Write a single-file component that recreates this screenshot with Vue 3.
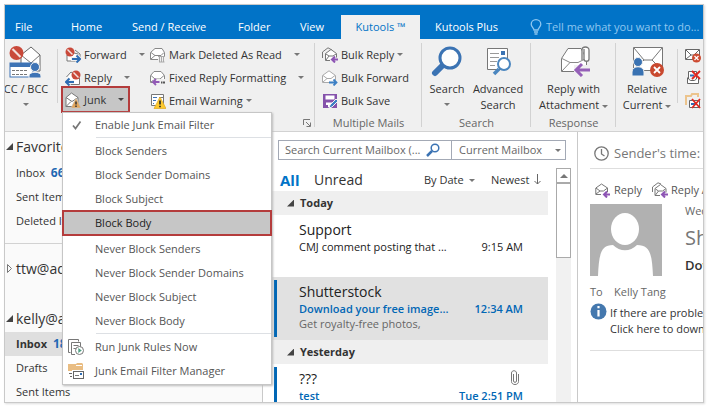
<script setup>
import { ref } from 'vue'

const tabs = [
  { name: 'File', cls: 'file' },
  { name: 'Home', cls: 'home' },
  { name: 'Send / Receive', cls: 'send' },
  { name: 'Folder', cls: 'folder' },
  { name: 'View', cls: 'view' },
  { name: 'Kutools ™', cls: 'active' },
  { name: 'Kutools Plus', cls: 'plus' }
]
const menu = [
  ['Block Senders', 'Block Sender Domains', 'Block Subject', 'Block Body'],
  ['Never Block Senders', 'Never Block Sender Domains', 'Never Block Subject', 'Never Block Body']
]
const search = ref('')
const tellMe = ref('')
</script>

<template>
  <div class="window">
    <header class="titlebar">
      <nav class="tabs">
        <button v-for="t in tabs" :key="t.name" class="tab" :class="t.cls">{{ t.name }}</button>
      </nav>
      <label class="tell">
        <svg width="12" height="16" viewBox="0 0 12 16" fill="none" stroke="#8fc7f0" stroke-width="1.3">
          <path d="M4 11C4 9 1.2 8 1.2 5.3a4.8 4.6 0 0 1 9.6 0C10.800 8 8 9 8 11zM4 13h4M4.500 15h3" />
        </svg>
        <input v-model="tellMe" type="text" placeholder="Tell me what you want to do..." aria-label="Tell me what you want to do" />
      </label>
    </header>

    <section class="ribbon">
      <div class="group g-bcc">
        <button class="big bcc">
          <svg width="34" height="34" viewBox="0 0 34 34">
            <path d="M12 10 22 2l9 8v16H12z" fill="#fff" stroke="#666" />
            <path d="M12 10l10 8 9-8" fill="none" stroke="#777" />
            <circle cx="7.500" cy="8" r="7" fill="#c9493a" />
            <path d="M3.500 4l8 8" stroke="#f3e0dc" stroke-width="2.200" />
            <rect x="1" y="18" width="23" height="14" fill="#fff" stroke="#3d73b5" />
            <rect x="1" y="18" width="23" height="4" fill="#3d73b5" />
            <path d="M3 25.500h15M3 29.500h15" stroke="#777" stroke-dasharray="3 1" />
            <circle cx="26" cy="22" r="4.500" fill="#3d73b5" stroke="#f0f0f0" />
            <path d="M20 33v-2c0-5 12-5 12 0v2z" fill="#3d73b5" stroke="#f0f0f0" />
          </svg>
          <span>CC / BCC</span>
          <i class="caret"></i>
        </button>
      </div>

      <div class="group g-auto">
        <div class="col col-a">
          <button class="small">
            <svg width="16" height="16" viewBox="0 0 16 16">
              <path d="M2 8l3-3 8 2v7H2z" fill="#fff" stroke="#777" />
              <circle cx="5" cy="5" r="4.500" fill="#c9493a" />
              <path d="M2.500 2.500l5 5" stroke="#f3e0dc" stroke-width="1.500" />
              <path d="M10 3l5 4v3" fill="none" stroke="#777" />
              <path d="M6 12h9M11.500 8.500 15 12l-3.500 3.500" fill="none" stroke="#f0f0f0" stroke-width="4" />
              <path d="M7 12h8M11.500 8.500 15 12l-3.500 3.500" fill="none" stroke="#2e6db4" stroke-width="2" />
            </svg>
            <span>Forward</span><i class="caret gap"></i>
          </button>
          <button class="small">
            <svg width="16" height="16" viewBox="0 0 16 16">
              <path d="M1.500 7 6 2l8.500 6v6.500h-9" fill="#fff" stroke="#777" />
              <circle cx="11" cy="5" r="4.500" fill="#c9493a" />
              <path d="M8.500 2.500l5 5" stroke="#f3e0dc" stroke-width="1.500" />
              <path d="M9 12H1M4.500 8.500 1 12l3.500 3.500" fill="none" stroke="#f0f0f0" stroke-width="4" />
              <path d="M9 12H1M4.500 8.500 1 12l3.500 3.500" fill="none" stroke="#2e6db4" stroke-width="2" />
            </svg>
            <span>Reply</span><i class="caret gap"></i>
          </button>
          <div class="junk-wrap">
            <button class="small junk" aria-haspopup="true" aria-expanded="true">
              <svg width="16" height="16" viewBox="0 0 16 16">
                <path d="M1 5.500 6.500 1 13 5.500v9H1z" fill="#fff" stroke="#777" />
                <path d="M1 5.500l6 4 6-4M1 14.500l5-5" fill="none" stroke="#777" />
                <path d="M11 6l5 10H6z" fill="#e3a65c" stroke="#c6c6c6" stroke-width=".6" />
                <path d="M11 9.500v3M11 13.500V15" stroke="#333" stroke-width="1.500" />
              </svg>
              <span>Junk</span><i class="caret gap dark"></i>
            </button>
            <div class="menu" role="menu">
              <div class="section">
                <button class="item" role="menuitem">
                  <svg width="16" height="16" viewBox="0 0 16 16" fill="none" stroke="#777" stroke-width="1.700"><path d="M5 8.500 7.500 11.500l5-7" /></svg>
                  <span>Enable Junk Email Filter</span>
                </button>
              </div>
              <div v-for="(sec, i) in menu" :key="i" class="section" :class="{ ruled: i === 0 }">
                <button v-for="m in sec" :key="m" class="item" :class="{ hot: m === 'Block Body' }" role="menuitem">
                  <i class="blank"></i><span>{{ m }}</span>
                </button>
              </div>
              <div class="section ruled">
                <button class="item" role="menuitem">
                  <svg width="16" height="16" viewBox="0 0 16 16" fill="none" stroke="#777">
                    <path d="M2.500 13.500h-2v-13h10v2" /><path d="M7 15.500H3.500v-12h9V8M5.500 6.500h5M5.500 9.500H8" />
                    <circle cx="11.500" cy="11.500" r="4" fill="#fff" /><path d="M10.300 9v5l3.500-2.500z" fill="#4f9f84" stroke="none" />
                  </svg>
                  <span>Run Junk Rules Now</span>
                </button>
                <button class="item" role="menuitem">
                  <svg width="16" height="16" viewBox="0 0 16 16">
                    <path d="M0 1h8l1-1h5l1 1v7H0z" fill="#e9bd83" /><path d="M8 2.500h6" stroke="#fff" />
                    <path d="M4 7h12v9H4z" fill="#fff" />
                    <path d="M1 10.500h3M2 13.500h2" stroke="#666" />
                    <rect x="5.500" y="8.500" width="10" height="7" fill="#fff" stroke="#666" /><path d="M7 12.500h4" stroke="#777" /><rect x="12" y="10" width="2" height="2" fill="#2e6db4" />
                  </svg>
                  <span>Junk Email Filter Manager</span>
                </button>
              </div>
            </div>
          </div>
        </div>
        <div class="col col-b">
          <button class="small">
            <svg width="16" height="16" viewBox="0 0 16 16">
              <path d="M.5 12.500v-7L5 1.500h7l2.500 4v7z" fill="#fff" stroke="#888" />
              <path d="M1 5.500l4 3h6l3-3M1 12l4-3.500" fill="none" stroke="#888" />
              <path d="M8 9h7v6H8z" fill="#f0f0f0" /><path d="M8 9.500h7M9.500 10v5M11.500 10v5M13.500 10v5M9 15h5.500" stroke="#aaa" />
            </svg>
            <span>Mark Deleted As Read</span><i class="caret gap"></i>
          </button>
          <button class="small">
            <svg width="16" height="16" viewBox="0 0 16 16">
              <path d="M.5 12.500v-7L4 1.500h7l3.500 4v7z" fill="#fff" stroke="#888" />
              <path d="M1 5.500l4 3.500h5l4-3.500M1 12l4-3" fill="none" stroke="#888" />
              <path d="M3 9h12v6H3z" fill="#f0f0f0" />
              <path d="M9.500 12H3M6 9l-3 3 3 3" fill="none" stroke="#9159b5" stroke-width="1.800" />
              <path d="M11 12.500h1.500M13 12.500h2" stroke="#555" stroke-width="2" />
            </svg>
            <span>Fixed Reply Formatting</span><i class="caret gap"></i>
          </button>
          <button class="small">
            <svg width="16" height="16" viewBox="0 0 16 16">
              <path d="M1.500 1.500h12v11h-12z" fill="#fff" stroke="#777" />
              <path d="M3 4.500h4M3 7.500h3M3 10.500h1" stroke="#3d73b5" /><path d="M9 4.500h4" stroke="#777" />
              <path d="M10 4l6 11.500H4z" fill="#fcc92e" stroke="#e0a822" stroke-width=".7" />
              <path d="M10 7.500v4M10 12.800v1.500" stroke="#222" stroke-width="1.600" />
            </svg>
            <span>Email Warning</span><i class="caret near"></i>
          </button>
        </div>
        <svg class="launcher" width="8" height="8" viewBox="0 0 8 8" fill="none" stroke="#777"><path d="M.5 6V.5H7M3 3l4 4M7.500 3.500v4h-4" /></svg>
      </div>

      <div class="group g-multi">
        <div class="col">
          <button class="small">
            <svg width="16" height="16" viewBox="0 0 16 16" fill="none" stroke="#777">
              <path d="M.5 11V5L6 .8 10 3" /><path d="M3.500 13.500v-7L9 2.500l5.500 4v4M3.500 13.500H8" fill="#fff" />
              <path d="M4 7l3 2h4l3-2M4 13l3-4" /><path d="M16 12.500h-6M13 9.500l-3 3 3 3" stroke="#8d55b4" stroke-width="2" />
            </svg>
            <span>Bulk Reply</span><i class="caret near"></i>
          </button>
          <button class="small">
            <svg width="16" height="16" viewBox="0 0 16 16" fill="none" stroke="#aaa">
              <path d="M.5 12.500V5.500L7 .8l6.500 4.700v7z" fill="#fff" /><path d="M1 5.500l4 3h4l4-3M1 12l4-3.500" />
              <path d="M7 12.500h8" stroke="#f0f0f0" stroke-width="4" /><path d="M7 12.500h7.500M11.500 9.500l3 3-3 3" stroke="#3d80c4" stroke-width="1.800" />
            </svg>
            <span>Bulk Forward</span>
          </button>
          <button class="small">
            <svg width="16" height="16" viewBox="0 0 16 16">
              <path d="M1 1h14v14H1z" fill="#8552ab" /><path d="M3.500 2.500h9v4h-9zM4 9.500h6V14H6v-2H4z" fill="#fff" />
              <path d="M7 15l1-3 6-6 2 2-6 6z" fill="#3d80c4" stroke="#f0f0f0" />
            </svg>
            <span>Bulk Save</span>
          </button>
        </div>
        <div class="caption">Multiple Mails</div>
      </div>

      <div class="group g-search">
        <div class="row">
          <button class="big b-search">
            <svg width="32" height="32" viewBox="0 0 32 32">
              <path d="M13 19 4 28" stroke="#3b73b3" stroke-width="6" stroke-linecap="round" />
              <circle cx="19" cy="13" r="10" fill="#fdfdfd" stroke="#3b73b3" stroke-width="3" />
            </svg>
            <span>Search</span><i class="caret"></i>
          </button>
          <button class="big b-adv">
            <svg width="32" height="32" viewBox="0 0 32 32">
              <path d="M5.500 3.500h20v21h-20z" fill="#fff" stroke="#777" />
              <path d="M8 8.500h9M8 12.500h9M8 16.500h7M8 20.500h5" stroke="#999" /><rect x="19" y="6" width="4" height="4" fill="#3b73b3" />
              <path d="M17 24l-5 5" stroke="#4b86bf" stroke-width="3.500" />
              <circle cx="22" cy="19" r="6" fill="#fff" stroke="#4b86bf" stroke-width="2" />
            </svg>
            <span>Advanced<br />Search</span>
          </button>
        </div>
        <div class="caption">Search</div>
      </div>

      <div class="group g-resp">
        <button class="big">
          <svg width="32" height="32" viewBox="0 0 32 32">
            <path d="M3.500 13.500v13h25v-13L23 3.500H10z" fill="#fff" stroke="#777" />
            <path d="M4 13.500l8 4h8l8-4M4 26l8-8.500M28 26l-5-5" fill="none" stroke="#888" />
            <path d="M26 4v10c0 3 5 3 5 0V5c0-4-7-4-7 0v10" fill="#fff" stroke="#777" stroke-width="1.300" />
            <path d="M16 20h18v12H16z" fill="#f0f0f0" />
            <path d="M32 25H18M24 19l-6 6 6 6" fill="none" stroke="#9560b8" stroke-width="3" />
          </svg>
          <span>Reply with<br />Attachment <i class="caret"></i></span>
        </button>
        <div class="caption">Response</div>
      </div>

      <div class="group g-rel">
        <button class="big">
          <svg width="34" height="32" viewBox="0 0 34 32">
            <path d="M3.500 2.500h29v23h-29z" fill="#fff" stroke="#777" />
            <path d="M4 3l10 12h8L32 3M4 25l10-10M32 25L22 15" fill="none" stroke="#777" />
            <path d="M2 31v-4c0-7 12-7 12 0v4z" fill="#3972b2" stroke="#f0f0f0" />
            <circle cx="8" cy="17" r="4.500" fill="#3972b2" stroke="#f0f0f0" />
            <circle cx="27" cy="25" r="7" fill="#c9492f" /><path d="M24 22l6 6M30 22l-6 6" stroke="#fff" stroke-width="1.800" />
          </svg>
          <span>Relative<br />Current <i class="caret"></i></span>
        </button>
      </div>

      <div class="group g-more">
        <button class="icon" aria-label="Remove mail">
          <svg width="16" height="16" viewBox="0 0 16 16" fill="none" stroke="#666"><path d="M.5 2.500h14v10H.5z" fill="#fff" /><path d="M1 3l5 5h3l5-5M1 12l5-4" /><circle cx="11.500" cy="11" r="4.500" fill="#cd4b32" stroke="none" /><path d="M9.500 9l4 4M13.500 9l-4 4" stroke="#fff" stroke-width="1.200" /></svg>
        </button>
        <button class="icon" aria-label="Remove attachment">
          <svg width="16" height="16" viewBox="0 0 16 16" fill="none" stroke="#666"><path d="M2.500 7.500v6h11v-6M3.500 9V1.500h8V9l-2 1.500h-4z" fill="#fff" /><path d="M5 5.500h4" stroke="#2e6db4" stroke-width="2" /><path d="M7 1l8 8M15 1L7 9" stroke="#e0271f" stroke-width="1.800" /></svg>
        </button>
        <button class="icon" aria-label="Remove folder">
          <svg width="16" height="16" viewBox="0 0 16 16" fill="none" stroke="#666"><path d="M1 12V3h5l1-2h6v3" stroke="#ecc48d" stroke-width="2" /><path d="M4.500 7.500h10v7h-10z" fill="#fff" /><path d="M6 11h4" stroke="#2e6db4" stroke-width="2" /><path d="M7 6l8 9M15 6l-8 9" stroke="#e0271f" stroke-width="1.800" /></svg>
        </button>
      </div>
    </section>

    <main class="body">
      <aside class="folders">
        <h2><i class="tri open"></i>Favorites</h2>
        <a href="#" class="fold">Inbox <b>66</b></a>
        <a href="#" class="fold">Sent Items</a>
        <a href="#" class="fold">Deleted Items</a>
        <h2 class="acct first"><svg width="7" height="11" viewBox="1 0 7 11" fill="none" stroke="#777"><path d="M2.500 1.500v8l4-4z" /></svg>ttw@addin</h2>
        <h2 class="acct"><i class="tri open"></i>kelly@addin</h2>
        <a href="#" class="fold sel"><strong>Inbox</strong> <b>18</b></a>
        <a href="#" class="fold">Drafts</a>
        <a href="#" class="fold">Sent Items</a>
      </aside>

      <section class="list">
        <div class="find">
          <label class="box">
            <input v-model="search" type="text" placeholder="Search Current Mailbox (..." aria-label="Search Current Mailbox" />
            <svg width="14" height="14" viewBox="0 0 14 14" fill="none" stroke="#3b73b3"><path d="M6 8l-5 5" stroke-width="2.500" /><circle cx="9" cy="5" r="3.800" stroke-width="1.500" /></svg>
          </label>
          <div class="scope">
            <select aria-label="Search scope"><option>Current Mailbox</option></select>
            <i class="caret"></i>
          </div>
        </div>
        <div class="cols">
          <div class="mail">
            <div class="sort">
              <button class="all">All</button>
              <button class="unread">Unread</button>
              <button class="by">By Date <i class="caret"></i></button>
              <button class="newest">Newest <svg width="7" height="11" viewBox="0 0 7 11" fill="none" stroke="#666"><path d="M3.500 0v10M.5 7l3 3 3-3" /></svg></button>
            </div>
            <div class="day"><i class="tri open"></i>Today</div>
            <article class="msg">
              <h3>Support</h3>
              <p><span>CMJ comment posting that ...</span><time>9:15 AM</time></p>
            </article>
            <article class="msg new picked">
              <h3>Shutterstock</h3>
              <p class="hot"><span>Download your free image...</span><time>12:34 AM</time></p>
              <p class="pre">Get royalty-free photos,</p>
            </article>
            <div class="day"><i class="tri open"></i>Yesterday</div>
            <article class="msg new">
              <h3>???<svg width="8" height="15" viewBox="0 0 8 15" fill="none" stroke="#777"><path d="M2.500 4v7c0 1.800 3 1.800 3 0V3c0-3-5-3-5 0v8.500c0 4 7 4 7 0V4" /></svg></h3>
              <p class="hot"><span>test</span><time>Tue 2:51 PM</time></p>
            </article>
          </div>
          <div class="scroll">
            <button class="up" aria-label="Scroll up"><i></i></button>
            <div class="thumb"></div>
          </div>
        </div>
      </section>

      <section class="read">
        <div class="when">
          <svg width="15" height="15" viewBox="0 0 15 15" fill="none" stroke="#777" stroke-width="1.300"><circle cx="7.500" cy="7.500" r="6.700" /><path d="M7.500 3v5l3 2" /></svg>
          Sender's time:
        </div>
        <div class="acts">
          <button><svg width="16" height="16" viewBox="0 0 16 16" fill="none" stroke="#777"><path d="M.8 12.500V6L6.500 2l6 4v4M.8 12.500H6M1 6l4 3h3.500l4-3M1 12l4-3" /><path d="M15 12.500H9M12 9.500l-3 3 3 3" stroke="#8d55b4" stroke-width="2" /></svg>Reply</button>
          <button><svg width="16" height="16" viewBox="0 0 16 16" fill="none" stroke="#777"><path d="M.5 10V5L6 .8 9 2M3 13.500v-7l5.500-4 5.500 4v4M3 13.500h5M3.500 7l3 2h4l3-2M3.500 13l3-4" /><path d="M16 12.500h-6M13 9.500l-3 3 3 3" stroke="#8d55b4" stroke-width="2" /></svg>Reply All</button>
        </div>
        <div class="head">
          <svg class="avatar" width="72" height="72" viewBox="0 0 72 72">
            <rect width="72" height="72" fill="#b1b1b1" />
            <ellipse cx="35" cy="25" rx="14" ry="16" fill="#fff" />
            <path d="M8 72c1-20 2-31 15-31 7 7 17 7 24 0 14 0 15 11 16 31z" fill="#fff" />
          </svg>
          <div class="who">
            <div class="date">Wednesday</div>
            <div class="from">Shutterstock</div>
            <div class="subj">Download</div>
          </div>
        </div>
        <div class="to"><span>To</span>Kelly Tang</div>
        <div class="info">
          <svg width="17" height="17" viewBox="0 0 17 17"><circle cx="8.500" cy="8.500" r="8" fill="#4478ae" /><path d="M8.500 7v6.500M8.500 3v2.200" stroke="#fff" stroke-width="2.200" /></svg>
          <p>If there are problems<br />Click here to download</p>
        </div>
      </section>
    </main>
  </div>
</template>

<style>
body { background: #fff; }
</style>

<style scoped>
* { box-sizing: border-box; }
.window {
  margin: 4px 6px 3px 4px;
  height: calc(100vh - 7px);
  min-height: 240px;
  border: 1px solid #c9c9c9;
  box-shadow: 1px 1px 2px #ddd;
  overflow: hidden;
  display: flex;
  flex-direction: column;
  font: 11px/16px "Open Sans", "Noto Sans", sans-serif;
  color: #333;
  background: #fff;
}
button, input, select { font: inherit; color: inherit; background: none; border: 0; padding: 0; margin: 0; outline: 0; }
button, .fold, h2, h3, p { white-space: nowrap; }
svg { flex: none; display: block; }
h2, h3, p { margin: 0; font-weight: 400; }

.titlebar { flex: none; height: 34px; background: #0173c7; display: flex; align-items: flex-end; color: #fff; }
.tabs { display: flex; }
.tab { height: 24px; text-align: left; padding-left: 10px; }
.file { width: 56px; }
.home { width: 61px; }
.send { width: 106px; }
.folder { width: 62px; }
.view { width: 51px; }
.active { width: 79px; padding: 0; background: #f0f0f0; color: #0173c7; text-align: center; }
.plus { width: 102px; padding-left: 15px; }
.tell { flex: 1; min-width: 0; height: 24px; display: flex; align-items: center; gap: 4px; padding-left: 8px; }
.tell input { flex: 1; min-width: 0; }
.tell input::placeholder { color: #8fc7f0; opacity: 1; }

.ribbon { flex: none; height: 93px; background: #f0f0f0; border-bottom: 1px solid #d2d2d2; display: flex; position: relative; z-index: 2; }
.group { flex: none; position: relative; padding-top: 4px; }
.group::after { content: ""; position: absolute; right: 0; top: 4px; bottom: 4px; width: 1px; background: #d2d2d2; }
.g-bcc::after, .g-rel::after { top: 10px; bottom: 28px; }
.g-more::after { display: none; }
.caret { display: inline-block; width: 0; height: 0; border: 3px solid transparent; border-top-color: #777; border-bottom: 0; vertical-align: middle; flex: none; }
.caret.gap { margin-left: 9px; }
.caret.dark { border-top-color: #444; }
.big { display: flex; flex-direction: column; align-items: center; text-align: center; padding-top: 2px; }
.big svg { margin-bottom: 4px; }
.big > .caret { margin-top: 6px; }
.bcc { width: 42px; }
.bcc svg { margin-bottom: 2px; }
.g-bcc { width: 53px; }
.g-auto { width: 257px; display: flex; }
.g-multi { width: 107px; padding-left: 7px; }
.g-search { width: 109px; }
.g-resp { width: 85px; }
.g-resp .big { width: 100%; }
.g-rel { width: 62px; }
.g-rel .big { width: 100%; }
.g-more { padding: 4px 0 0 7px; display: flex; flex-direction: column; }
.col { display: flex; flex-direction: column; align-items: flex-start; }
.col-a { width: 92px; padding-left: 3px; }
.row { display: flex; }
.b-search { width: 50px; }
.b-adv { width: 52px; }
.small, .icon { height: 23px; display: flex; align-items: center; gap: 3px; }
.col-a .small { padding-left: 4px; }
.caption { position: absolute; left: 0; right: 0; bottom: 0; line-height: 16px; text-align: center; color: #666; }
.launcher { position: absolute; right: 4px; bottom: 4px; }
.junk-wrap { position: relative; }
.junk { width: 69px; height: 27px; margin-top: -3px; background: #c6c6c6; border: 2px solid #b43c3c; }
.col-a .junk { padding-left: 2px; }

.menu { position: absolute; left: 1px; top: 23px; width: 210px; background: #fff; border: 1px solid #c6c6c6; box-shadow: 1px 1px 2px #bbb; padding-bottom: 1px; color: #555; display: flex; flex-direction: column; gap: 2px; }
.section { position: relative; }
.ruled::before { content: ""; position: absolute; left: 33px; right: 0; top: -2px; height: 1px; background: #dde0e4; }
.item { width: 100%; height: 24px; display: flex; align-items: center; gap: 11px; padding-left: 5px; }
.blank { width: 16px; }
.item.hot { background: #c6c6c6; color: #222; box-shadow: 0 0 0 1px #b43c3c, inset 0 0 0 1px #b43c3c; }

.body { flex: 1; min-height: 0; display: flex; }
.folders { flex: none; width: 258px; background: #fafafa; border-right: 1px solid #c9c9c9; overflow: hidden; color: #333; }
.folders h2 { height: 29px; display: flex; align-items: center; font-size: 14px; color: #333; gap: 3px; padding-left: 1px; }
.tri { width: 7px; height: 7px; background: #444; clip-path: polygon(100% 0, 100% 100%, 0 100%); flex: none; }
.fold { display: block; height: 24px; line-height: 24px; padding-left: 11px; color: inherit; text-decoration: none; }
.fold b { color: #1f68b3; margin-left: 3px; font-size: 12px; }
.fold.sel { background: #dfdfdf; }
.folders .acct { height: 27px; }
.folders .first { border-top: 1px solid #d2d2d2; margin: 10px 0 12px; height: 50px; }

.list { flex: none; width: 315px; display: flex; flex-direction: column; border-right: 1px solid #c9c9c9; overflow: hidden; }
.find { flex: none; display: flex; height: 28px; padding: 8px 11px 0 15px; color: #666; }
.box { flex: 1; min-width: 0; display: flex; align-items: center; border: 1px solid #a3a9b5; padding: 0 11px 0 6px; }
.box input { flex: 1; min-width: 0; }
.box input::placeholder { color: #666; opacity: 1; }
.scope { width: 114px; border: 1px solid #a3a9b5; border-left: 0; display: flex; align-items: center; padding: 0 4px 0 7px; }
.scope select { appearance: none; flex: 1; min-width: 0; }
.cols { flex: 1; min-height: 0; display: flex; }
.mail { flex: 1; min-width: 0; overflow: hidden; }
.sort { height: 31px; display: flex; align-items: center; padding: 8px 0 0 17px; }
.all { font-size: 15px; font-weight: 700; color: #0173c7; width: 34px; text-align: left; }
.unread { font-size: 14px; width: 110px; text-align: left; }
.by { width: 67px; text-align: left; }
.by .caret { margin-left: 2px; }
.newest { display: flex; align-items: center; gap: 5px; }
.day { height: 24px; background: #efefef; display: flex; align-items: center; gap: 6px; padding-left: 24px; font-weight: 700; }
.msg { height: 62px; padding: 6px 25px 0 36px; position: relative; color: #222; }
.msg h3 { font-size: 14px; line-height: 18px; display: flex; justify-content: space-between; }
.msg h3 svg { margin-right: 4px; }
.msg p { line-height: 15px; display: flex; justify-content: space-between; }
.msg.new::before { content: ""; position: absolute; left: 11px; top: 3px; bottom: 3px; width: 3px; background: #0167b5; }
.picked { background: #e1e1e1; height: 63px; }
.msg .hot { color: #0167b5; font-weight: 600; }
.msg .pre { color: #666; }
.scroll { width: 15px; margin: 8px 6px 0 8px; background: #f1f1f1; }
.up { width: 15px; height: 15px; border: 1px solid #aaa; background: #fff; display: flex; align-items: center; justify-content: center; }
.up i { border: 4px solid transparent; border-top: 0; border-bottom-color: #777; }
.thumb { height: 75px; background: #fff; border: 1px solid #aaa; }

.read { flex: 1; min-width: 0; padding-left: 12px; overflow: hidden; }
.when { height: 37px; border-bottom: 1px solid #dedede; display: flex; align-items: center; gap: 5px; padding: 6px 0 0 4px; font-size: 13px; color: #777; white-space: nowrap; }
.acts { height: 35px; padding: 6px 0 0 5px; display: flex; align-items: center; gap: 10px; color: #555; }
.acts button { display: flex; align-items: center; gap: 3px; }
.head { display: flex; gap: 23px; }
.who { white-space: nowrap; }
.date { line-height: 14px; color: #666; }
.from { font-size: 20px; line-height: 40px; color: #777; }
.subj { font-size: 13px; line-height: 15px; font-weight: 600; }
.to { height: 27px; padding-top: 8px; display: flex; color: #666; white-space: nowrap; }
.to span { width: 24px; }
.info { display: flex; gap: 3px; height: 48px; border-bottom: 1px solid #dedede; }
.info p { padding-top: 2px; }
</style>
